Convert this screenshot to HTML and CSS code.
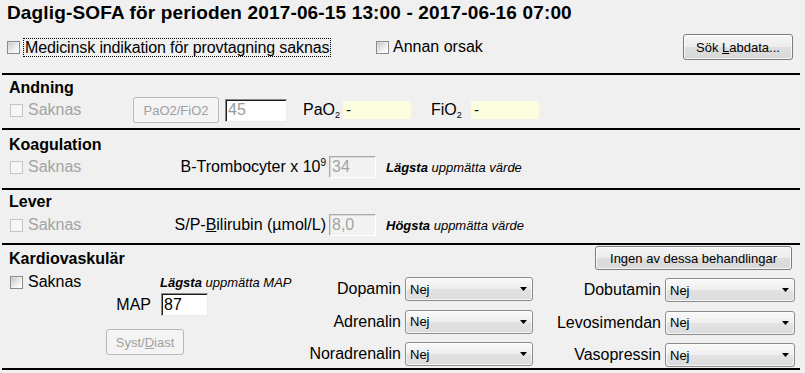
FILE: index.html
```html
<!DOCTYPE html>
<html lang="sv">
<head>
<meta charset="utf-8">
<title>Daglig-SOFA</title>
<link rel="stylesheet" href="styles.css">
</head>
<body>
<div class="page">
  <h1 class="title">Daglig-SOFA för perioden 2017-06-15 13:00 - 2017-06-16 07:00</h1>

  <div class="top-row">
    <div class="opt opt-med">
      <span class="chk"></span>
      <span class="focus-lbl">Medicinsk indikation för provtagning saknas</span>
    </div>
    <div class="opt">
      <span class="chk"></span>
      <span class="opt-lbl">Annan orsak</span>
    </div>
    <button class="btn btn-lab" type="button">Sök <u>L</u>abdata...</button>
  </div>

  <section class="sec sec-andning">
    <h2 class="sec-title">Andning</h2>
    <div class="row row-andning">
      <div class="miss dis"><span class="chk chk-dis"></span><span class="miss-lbl">Saknas</span></div>
      <button class="btn btn-dis btn-ratio" type="button">PaO2/FiO2</button>
      <span class="inp inp-ro w62">45</span>
      <span class="sublbl sublbl-pao">PaO<sub>2</sub></span>
      <span class="yfield">-</span>
      <span class="sublbl sublbl-fio">FiO<sub>2</sub></span>
      <span class="yfield">-</span>
    </div>
  </section>

  <section class="sec sec-koag">
    <h2 class="sec-title">Koagulation</h2>
    <div class="row row-val">
      <div class="miss dis"><span class="chk chk-dis"></span><span class="miss-lbl">Saknas</span></div>
      <span class="val-lbl">B-Trombocyter x 10<sup>9</sup></span>
      <span class="inp inp-dis w47">34</span>
      <span class="hint"><b>Lägsta</b> uppmätta värde</span>
    </div>
  </section>

  <section class="sec sec-lever">
    <h2 class="sec-title">Lever</h2>
    <div class="row row-val">
      <div class="miss dis"><span class="chk chk-dis"></span><span class="miss-lbl">Saknas</span></div>
      <span class="val-lbl">S/P-<u>B</u>ilirubin (µmol/L)</span>
      <span class="inp inp-dis w47">8,0</span>
      <span class="hint"><b>Högsta</b> uppmätta värde</span>
    </div>
  </section>

  <section class="sec sec-kardio">
    <div class="kcol kcol-a">
      <h2 class="sec-title">Kardiovaskulär</h2>
      <div class="row k-row1">
        <div class="miss miss-k"><span class="chk"></span><span class="miss-lbl">Saknas</span></div>
        <span class="hint"><b>Lägsta</b> uppmätta MAP</span>
      </div>
      <div class="row k-row2">
        <span class="map-lbl">MAP</span>
        <span class="inp inp-on w47">87</span>
      </div>
      <div class="row k-row3">
        <button class="btn btn-dis btn-syst" type="button">Syst/<u>D</u>iast</button>
      </div>
    </div>

    <div class="kcol kcol-b">
      <div class="drug-grid grid-b">
        <span class="drug-lbl">Dopamin</span>
        <div class="sel"><span>Nej</span><svg width="7" height="4" viewBox="0 0 7 4"><polygon points="0,0 7,0 3.5,4" fill="#000"/></svg></div>
        <span class="drug-lbl">Adrenalin</span>
        <div class="sel"><span>Nej</span><svg width="7" height="4" viewBox="0 0 7 4"><polygon points="0,0 7,0 3.5,4" fill="#000"/></svg></div>
        <span class="drug-lbl">Noradrenalin</span>
        <div class="sel"><span>Nej</span><svg width="7" height="4" viewBox="0 0 7 4"><polygon points="0,0 7,0 3.5,4" fill="#000"/></svg></div>
      </div>
    </div>

    <div class="kcol kcol-c">
      <button class="btn btn-none" type="button">Ingen av dessa behandlingar</button>
      <div class="drug-grid grid-c">
        <span class="drug-lbl">Dobutamin</span>
        <div class="sel sel-c"><span>Nej</span><svg width="7" height="4" viewBox="0 0 7 4"><polygon points="0,0 7,0 3.5,4" fill="#000"/></svg></div>
        <span class="drug-lbl">Levosimendan</span>
        <div class="sel sel-c"><span>Nej</span><svg width="7" height="4" viewBox="0 0 7 4"><polygon points="0,0 7,0 3.5,4" fill="#000"/></svg></div>
        <span class="drug-lbl">Vasopressin</span>
        <div class="sel sel-c"><span>Nej</span><svg width="7" height="4" viewBox="0 0 7 4"><polygon points="0,0 7,0 3.5,4" fill="#000"/></svg></div>
      </div>
    </div>
  </section>
</div>
</body>
</html>
```

FILE: styles.css
```css
* { box-sizing: border-box; }

html, body {
  margin: 0;
  padding: 0;
  background: #f0f0f0;
}

body {
  font-family: "Liberation Sans", Arial, sans-serif;
  font-size: 16px;
  color: #000;
  width: 805px;
  height: 373px;
  overflow: hidden;
}

.title {
  margin: 0;
  padding: 2px 0 0 7px;
  font-size: 19px;
  line-height: 22px;
  font-weight: bold;
  letter-spacing: 0.15px;
  white-space: nowrap;
}

/* ---------- top row ---------- */
.top-row {
  display: flex;
  align-items: center;
  height: 26px;
  margin: 10px 0 13px 0;
  padding-left: 7px;
}

.opt {
  display: flex;
  align-items: center;
}

.opt-med { width: 369px; }

.focus-lbl {
  margin-left: 3px;
  border: 1px dotted #000;
  padding: 0 1px;
  line-height: 17px;
  letter-spacing: -0.12px;
  white-space: nowrap;
}

.opt-lbl {
  margin-left: 4px;
  white-space: nowrap;
}

/* ---------- checkboxes ---------- */
.chk {
  display: inline-block;
  flex: none;
  width: 13px;
  height: 13px;
  border: 1px solid #8a8a8a;
  background: linear-gradient(135deg, #c0c0c0 0%, #e4e4e4 45%, #fafafa 80%, #fff 100%);
  box-shadow: inset 0 0 0 1px rgba(255,255,255,0.35);
}

.chk-dis {
  border-color: #c6c6c6;
  background: #f6f6f6;
  box-shadow: none;
}

/* ---------- buttons ---------- */
.btn {
  font-family: "Liberation Sans", Arial, sans-serif;
  font-size: 13px;
  color: #000;
  height: 26px;
  padding: 0;
  border: 1px solid #7c7c7c;
  border-radius: 3px;
  background: linear-gradient(#f6f6f6 0%, #ececec 50%, #dedede 51%, #d8d8d8 100%);
  box-shadow: inset 0 0 0 1px rgba(255,255,255,0.8);
  white-space: nowrap;
}

.btn-lab {
  margin-left: auto;
  margin-right: 12px;
  width: 110px;
}

.btn-dis {
  color: #a0a0a0;
  border-color: #b8b8b8;
  background: #f4f4f4;
  box-shadow: none;
}

.btn-ratio { width: 86px; }

.btn-syst { width: 78px; height: 26px; margin-left: 97px; }

.btn-none {
  width: 197px;
  height: 24px;
  margin: 1px 0 0 60px;
}

/* ---------- sections ---------- */
.sec {
  margin: 0 5px 0 2px;
  padding-left: 7px;
  border-top: 2px solid #000;
  box-sizing: content-box;
}

.sec-title {
  margin: 0;
  font-size: 16px;
  line-height: 18px;
  font-weight: bold;
}

.sec-andning { height: 49px; padding-top: 4px; }
.sec-koag    { height: 52px; padding-top: 6px; }
.sec-lever   { height: 50px; padding-top: 3px; }
.sec-kardio  {
  height: 123px;
  border-bottom: 2px solid #000;
  display: flex;
  align-items: flex-start;
}

.row {
  display: flex;
  align-items: center;
}

.row-andning { height: 26px; }
.sec-koag .row-val { height: 24px; margin-top: 1px; }
.sec-lever .row-val { height: 24px; margin-top: 2px; }

.miss {
  display: flex;
  align-items: center;
  width: 124px;
  flex: none;
}

.miss .chk { margin-left: 1px; }

.miss-lbl { margin-left: 5px; }

.dis { color: #a3a3a3; }

/* ---------- inputs ---------- */
.inp {
  display: inline-flex;
  align-items: center;
  height: 23px;
  padding-left: 2px;
  border-style: solid;
  border-width: 1px;
  font-size: 16px;
  flex: none;
}

.w62 { width: 62px; }
.w47 { width: 47px; }

.inp-ro {
  margin-left: 6px;
  background: #fff;
  color: #9a9a9a;
  border-color: #8a8a8a #ececec #ececec #8a8a8a;
  box-shadow: inset 1px 1px 0 #1a1a1a;
}

.inp-on {
  background: #fff;
  color: #000;
  border-color: #8a8a8a #ececec #ececec #8a8a8a;
  box-shadow: inset 1px 1px 0 #1a1a1a;
}

.inp-dis {
  height: 22px;
  margin-left: 3px;
  background: #f3f3f3;
  color: #a3a3a3;
  border-color: #adadad #ffffff #ffffff #adadad;
  box-shadow: inset 1px 1px 0 #d8d8d8;
}

.sublbl {
  width: 38px;
  flex: none;
  white-space: nowrap;
}

.sublbl sub {
  font-size: 9px;
  vertical-align: -3px;
  line-height: 0;
}

.sublbl-pao { margin-left: 16px; }
.sublbl-fio { margin-left: 20px; }

.yfield {
  width: 68px;
  height: 18px;
  margin-left: 2px;
  padding-left: 3px;
  background: #fdfde0;
  font-size: 15px;
  line-height: 18px;
  flex: none;
}

.val-lbl {
  width: 193px;
  flex: none;
  text-align: right;
  white-space: nowrap;
}

.val-lbl sup {
  font-size: 10px;
  vertical-align: 6px;
  line-height: 0;
}

.hint {
  font-size: 13px;
  font-style: italic;
  white-space: nowrap;
}

.row-val .hint { margin-left: 10px; }

/* ---------- kardio ---------- */
.kcol-a {
  width: 291px;
  flex: none;
  padding-top: 5px;
}

.k-row1 { height: 16px; margin-top: 6px; }

.miss-k { width: 151px; }

.k-row2 { height: 23px; margin-top: 3px; }

.map-lbl {
  width: 142px;
  text-align: right;
  flex: none;
  margin-right: 10px;
}

.k-row3 { margin-top: 13px; }

.kcol-b {
  width: 235px;
  flex: none;
  padding-top: 32px;
}

.kcol-c {
  width: 262px;
  flex: none;
}

.drug-grid {
  display: grid;
  grid-auto-rows: 24px;
  row-gap: 8.5px;
  column-gap: 4px;
  align-items: center;
}

.grid-b { grid-template-columns: 101px 128px; }
.grid-c { grid-template-columns: 126px 130px; margin-top: 8px; }

.drug-lbl {
  text-align: right;
  white-space: nowrap;
}

.sel {
  display: flex;
  align-items: center;
  justify-content: space-between;
  height: 24px;
  padding: 0 5px 0 4px;
  border: 1px solid #8c8c8c;
  border-radius: 3px;
  background: linear-gradient(#f9f9f9 0%, #eeeeee 50%, #e2e2e2 51%, #dcdcdc 100%);
  box-shadow: inset 0 0 0 1px rgba(255,255,255,0.7);
  font-size: 13px;
}

.sel svg { display: block; }
```
